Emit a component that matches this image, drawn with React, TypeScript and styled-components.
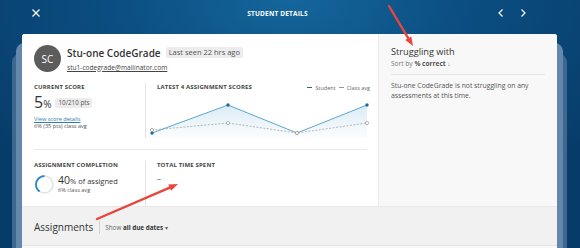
import React from "react";
import styled, { createGlobalStyle } from "styled-components";

const GlobalStyle = createGlobalStyle`
	html, body {
		margin: 0;
		padding: 0;
	}
	body {
		font-family: "Open Sans", "Liberation Sans", sans-serif;
		color: #333;
	}
`;

const Page = styled.div`
	background: radial-gradient(ellipse 70% 90% at 50% 0%, #14669c 0%, #0b4d80 45%, #073b68 100%);
	height: 248px;
	overflow: hidden;
	position: relative;
	width: 580px;
`;

const TopBar = styled.div`
	align-items: center;
	box-sizing: border-box;
	color: #fff;
	display: flex;
	height: 34px;
	padding: 0 52px 8px 31px;
`;

const Title = styled.div`
	flex: 1;
	font-size: 6.5px;
	font-weight: 700;
	letter-spacing: 0.2px;
	text-align: center;
	padding-left: 18px;
`;

const Nav = styled.div`
	display: flex;
	gap: 12px;
`;

const IconButton = styled.span`
	display: flex;
	height: 10px;
	width: 10px;
`;

const Card = styled.div`
	background: #fff;
	border-radius: 3px 3px 0 0;
	box-shadow: 0 15px 0 6px #6488ac, 0 29px 0 10px #3e6790;
	margin-left: 22px;
	position: relative;
	width: 535px;
`;

const CardInner = styled.div`
	border-radius: 3px 3px 0 0;
	overflow: hidden;
`;

const TopSection = styled.div`
	display: grid;
	grid-template-columns: 356px 1fr;
	height: 172px;
`;

const MainCol = styled.div`
	background: #fff;
	display: flex;
	flex-direction: column;
	padding: 0 11px 0 12px;
`;

const Profile = styled.div`
	align-items: center;
	display: flex;
	gap: 6px;
	padding-top: 11px;
`;

const Avatar = styled.div`
	align-items: center;
	background: #5c5c5c;
	border-radius: 50%;
	color: #fff;
	display: flex;
	font-size: 10px;
	height: 27px;
	justify-content: center;
	width: 27px;
`;

const NameLine = styled.div`
	align-items: center;
	display: flex;
	gap: 5px;
`;

const Name = styled.span`
	color: #333;
	font-size: 10px;
	font-weight: 600;
`;

const Badge = styled.span<{ $size?: number }>`
	background: #ececec;
	border-radius: 2px;
	color: #555;
	font-size: ${(p) => p.$size ?? 7.5}px;
	line-height: 1;
	padding: 2px 3px;
`;

const Email = styled.a`
	color: #444;
	display: block;
	font-size: 6.6px;
	margin-top: 3px;
	text-decoration: underline;
`;

const StatRow = styled.div<{ $top: number }>`
	display: grid;
	grid-template-columns: 111px 1fr;
	margin-top: ${(p) => p.$top}px;
`;

const Cell = styled.div<{ $divider?: boolean }>`
	border-left: ${(p) => (p.$divider ? "1px solid #e4e4e4" : "none")};
	padding-left: ${(p) => (p.$divider ? 11 : 0)}px;
	position: relative;
`;

const Label = styled.div`
	color: #444;
	font-size: 6px;
	font-weight: 700;
	letter-spacing: 0.15px;
	line-height: 9px;
	text-transform: uppercase;
`;

const ChartHead = styled.div`
	align-items: center;
	display: flex;
	justify-content: space-between;
`;

const Legend = styled.div`
	align-items: center;
	color: #666;
	display: flex;
	font-size: 5.5px;
	gap: 3px;
`;

const LegendMark = styled.span<{ $dashed?: boolean }>`
	border-top: 1.5px ${(p) => (p.$dashed ? "dashed #999" : "solid #1f6a99")};
	display: inline-block;
	width: 5px;
`;

const ScoreLine = styled.div`
	align-items: center;
	display: flex;
	gap: 4px;
	margin-top: 2px;
`;

const Big = styled.span`
	color: #333;
	font-size: 16px;
	line-height: 16px;
`;

const Unit = styled.span`
	font-size: 10px;
`;

const Link = styled.a`
	color: #2b7cb4;
	display: block;
	font-size: 5.6px;
	line-height: 7px;
	margin-top: 4px;
	text-decoration: underline;
`;

const Small = styled.div`
	color: #555;
	font-size: 5.6px;
	line-height: 7px;
`;

const Chart = styled.svg`
	display: block;
	margin-left: -7px;
	overflow: visible;
`;

const Rule = styled.div`
	border-top: 1px solid #e8e8e8;
	margin-top: 11px;
`;

const BottomRow = styled(StatRow)`
	flex: 1;
`;

const Completion = styled.div`
	align-items: center;
	display: flex;
	gap: 3px;
	margin-top: 4px;
`;

const CompletionText = styled.div`
	display: flex;
	flex-direction: column;
`;

const Pct = styled.div`
	color: #333;
	font-size: 7.5px;
	line-height: 11px;
`;

const PctNum = styled.span`
	font-size: 10.5px;
`;

const Dash = styled.div`
	color: #444;
	font-size: 8px;
	margin-top: 2px;
`;

const SideCol = styled.div`
	background: #f8f8f8;
	border-left: 1px solid #ececec;
	padding: 11px 12px 0 12px;
`;

const SideTitle = styled.div`
	color: #333;
	font-size: 9.2px;
	line-height: 13px;
`;

const Sort = styled.div`
	color: #777;
	font-size: 6.6px;
	line-height: 10px;
	margin-top: 1px;

	b {
		color: #555;
	}
`;

const SideRule = styled.div`
	border-top: 1px solid #e6e6e6;
	margin-top: 5px;
`;

const SideText = styled.div`
	color: #555;
	font-size: 6.8px;
	line-height: 10px;
	margin-top: 6px;
`;

const AssignBar = styled.div`
	align-items: center;
	background: #f1f1f1;
	border-top: 1px solid #e9e9e9;
	display: flex;
	height: 38px;
	padding-left: 12px;
`;

const AssignTitle = styled.span`
	color: #333;
	font-size: 10px;
	margin-top: 2px;
`;

const VBar = styled.span`
	background: #d4d4d4;
	display: inline-block;
	height: 13px;
	margin: 2px 5px 0 6px;
	width: 1px;
`;

const Filter = styled.span`
	color: #666;
	font-size: 6.3px;
	margin-top: 2px;

	b {
		color: #333;
	}
`;

const Below = styled.div`
	background: #f8f8f8;
	border-top: 1px solid #e6e6e6;
	height: 40px;
`;

const Overlay = styled.svg`
	left: 0;
	pointer-events: none;
	position: absolute;
	top: 0;
`;

const student = [
	[2, 41],
	[78, 13],
	[147, 41],
	[217, 13],
];
const classAvg = [
	[2, 38],
	[78, 31],
	[147, 41],
	[217, 31],
];

function ScoreChart() {
	const line = (pts: number[][]) => pts.map((p) => p.join(",")).join(" ");
	const area = `2,46 ${line(student)} 217,46`;
	return (
		<Chart width="220" height="46" viewBox="0 0 220 46">
			<defs>
				<linearGradient id="fill" x1="0" y1="0" x2="0" y2="1">
					<stop offset="0" stopColor="#5aa5cf" stopOpacity="0.22" />
					<stop offset="1" stopColor="#5aa5cf" stopOpacity="0.02" />
				</linearGradient>
			</defs>
			<polygon points={area} fill="url(#fill)" />
			<polyline points={line(student)} fill="none" stroke="#5ba6cf" strokeWidth="1" />
			<polyline points={line(classAvg)} fill="none" stroke="#9a9a9a" strokeWidth="0.7" strokeDasharray="2 1.5" />
			{student.map(([x, y], i) => (
				<circle key={"s" + i} cx={x} cy={y} r="1.7" fill="#1f6a99" />
			))}
			{classAvg.map(([x, y], i) => (
				<circle key={"c" + i} cx={x} cy={y} r="1.6" fill="#fff" stroke="#999" strokeWidth="0.7" />
			))}
		</Chart>
	);
}

function Donut() {
	const r = 8.5;
	const c = 2 * Math.PI * r;
	return (
		<svg width="21" height="21" viewBox="0 0 21 21">
			<circle cx="10.5" cy="10.5" r={r} fill="none" stroke="#e3e3e3" strokeWidth="1.6" />
			<circle
				cx="10.5"
				cy="10.5"
				r={r}
				fill="none"
				stroke="#2b86c2"
				strokeWidth="1.8"
				strokeDasharray={`${c * 0.4} ${c}`}
				transform="translate(21 0) scale(-1 1) rotate(-90 10.5 10.5)"
			/>
		</svg>
	);
}

export default function App() {
	return (
		<>
			<GlobalStyle />
			<Page>
				<TopBar>
					<IconButton>
						<svg width="10" height="10" viewBox="0 0 10 10">
							<path d="M1.5 1.5 L8.5 8.5 M8.5 1.5 L1.5 8.5" stroke="#fff" strokeWidth="1.2" />
						</svg>
					</IconButton>
					<Title>STUDENT DETAILS</Title>
					<Nav>
						<IconButton>
							<svg width="10" height="10" viewBox="0 0 10 10">
								<path d="M6.5 1.5 L3 5 L6.5 8.5" fill="none" stroke="#fff" strokeWidth="1.2" />
							</svg>
						</IconButton>
						<IconButton>
							<svg width="10" height="10" viewBox="0 0 10 10">
								<path d="M3.5 1.5 L7 5 L3.5 8.5" fill="none" stroke="#fff" strokeWidth="1.2" />
							</svg>
						</IconButton>
					</Nav>
				</TopBar>

				<Card>
					<CardInner>
						<TopSection>
							<MainCol>
								<Profile>
									<Avatar>SC</Avatar>
									<div>
										<NameLine>
											<Name>Stu-one CodeGrade</Name>
											<Badge>Last seen 22 hrs ago</Badge>
										</NameLine>
										<Email>stu1-codegrade@mailinator.com</Email>
									</div>
								</Profile>

								<StatRow $top={11}>
									<Cell>
										<Label>Current score</Label>
										<ScoreLine>
											<Big>
												5<Unit>%</Unit>
											</Big>
											<Badge $size={6.3}>10/210 pts</Badge>
										</ScoreLine>
										<Link>View score details</Link>
										<Small>6% (35 pts) class avg</Small>
									</Cell>
									<Cell $divider>
										<ChartHead>
											<Label>Latest 4 assignment scores</Label>
											<Legend>
												<LegendMark />
												<span>Student</span>
												<LegendMark $dashed />
												<span>Class avg</span>
											</Legend>
										</ChartHead>
										<ScoreChart />
									</Cell>
								</StatRow>

								<Rule />

								<BottomRow $top={11}>
									<Cell>
										<Label>Assignment completion</Label>
										<Completion>
											<Donut />
											<CompletionText>
												<Pct>
													<PctNum>40</PctNum>% of assigned
												</Pct>
												<Small>6% class avg</Small>
											</CompletionText>
										</Completion>
									</Cell>
									<Cell $divider>
										<Label>Total time spent</Label>
										<Dash>–</Dash>
									</Cell>
								</BottomRow>
							</MainCol>

							<SideCol>
								<SideTitle>Struggling with</SideTitle>
								<Sort>
									Sort by <b>% correct</b> ↓
								</Sort>
								<SideRule />
								<SideText>
									Stu-one CodeGrade is not struggling on any
									<br />
									assessments at this time.
								</SideText>
							</SideCol>
						</TopSection>

						<AssignBar>
							<AssignTitle>Assignments</AssignTitle>
							<VBar />
							<Filter>
								Show <b>all due dates</b> ▾
							</Filter>
						</AssignBar>
						<Below />
					</CardInner>
				</Card>

				<Overlay width="580" height="248" viewBox="0 0 580 248">
					<g stroke="#e8453c" strokeWidth="2.4" strokeLinecap="round">
						<line x1="389" y1="6" x2="408.3" y2="38.3" />
						<line x1="97" y1="219" x2="169.7" y2="187.6" />
					</g>
					<g fill="#e8453c">
						<polygon points="413,46 405.3,40.1 411.3,36.5" />
						<polygon points="178,184 171.1,190.8 168.3,184.4" />
					</g>
				</Overlay>
			</Page>
		</>
	);
}
